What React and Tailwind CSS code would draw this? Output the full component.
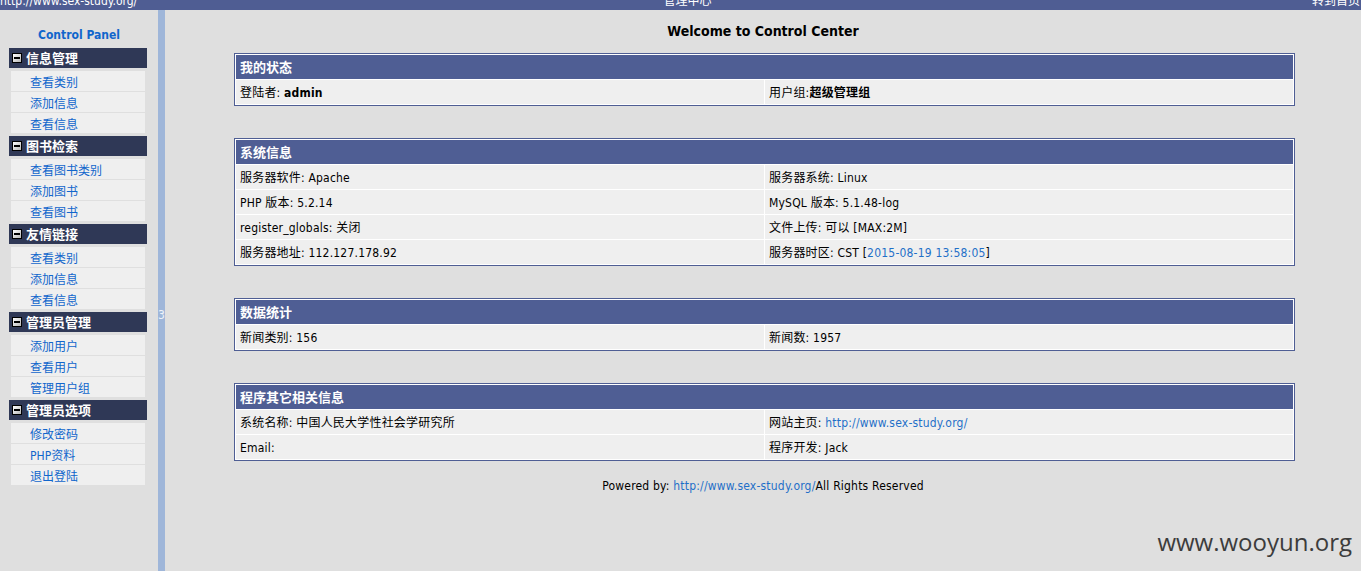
import React from "react";

const FONT = { fontFamily: '"DejaVu Sans Condensed", "DejaVu Sans", "Noto Sans CJK SC", sans-serif' };

const menu = [
  { title: "信息管理", items: ["查看类别", "添加信息", "查看信息"] },
  { title: "图书检索", items: ["查看图书类别", "添加图书", "查看图书"] },
  { title: "友情链接", items: ["查看类别", "添加信息", "查看信息"] },
  { title: "管理员管理", items: ["添加用户", "查看用户", "管理用户组"] },
  { title: "管理员选项", items: ["修改密码", "PHP资料", "退出登陆"] },
];

function MinusIcon() {
  return (
    <div className="w-[10px] h-[10px] border border-black bg-gradient-to-br from-white to-[#b8b8b8] flex items-center justify-center shrink-0">
      <div className="w-[6px] h-[2px] bg-black" />
    </div>
  );
}

function Box({ title, rows }) {
  return (
    <div className="w-[1061px] ml-[69px] border border-[#4f5e94] bg-white p-[1px] flex flex-col gap-[1px]">
      <div className="h-[24px] bg-[#4f5e94] text-white font-bold text-[13px] pl-[4px] pt-[2px] flex items-center">
        {title}
      </div>
      {rows.map((r, i) => (
        <div key={i} className="grid grid-cols-2 gap-[1px]">
          <div className="h-[24px] bg-[#efefef] pl-[4px] pt-[2px] flex items-center text-[12px] tracking-[0.2px] text-black whitespace-nowrap">{r[0]}</div>
          <div className="h-[24px] bg-[#efefef] pl-[4px] pt-[2px] flex items-center text-[12px] tracking-[0.2px] text-black whitespace-nowrap">{r[1]}</div>
        </div>
      ))}
    </div>
  );
}

export default function App() {
  const link = "text-[#1f6fc8]";
  return (
    <div className="relative h-[571px] w-full bg-[#dfdfdf] flex flex-col overflow-hidden" style={FONT}>
      {/* top bar */}
      <div className="h-[10px] bg-[#4f5d93] overflow-hidden text-white text-[12px] leading-[12px] grid grid-cols-3 shrink-0">
        <div className="-mt-[5px] whitespace-nowrap">http://www.sex-study.org/</div>
        <div className="-mt-[5px] text-center pl-[14px] whitespace-nowrap">管理中心</div>
        <div className="-mt-[5px] text-right pr-[1px] whitespace-nowrap">转到首页</div>
      </div>

      <div className="flex flex-1">
        {/* sidebar */}
        <div className="w-[158px] shrink-0 flex flex-col">
          <div className="pt-[17px] mb-[5px] leading-[16px] text-center text-[12px] font-bold text-[#1166cc]">
            Control Panel
          </div>
          {menu.map((sec) => (
            <div key={sec.title} className="mb-[3px]">
              <div className="ml-[9px] w-[138px] h-[20px] bg-[#2f3856] flex items-center pl-[3px] gap-[4px]">
                <MinusIcon />
                <span className="text-white font-bold text-[13px] leading-[20px] pt-[2px]">{sec.title}</span>
              </div>
              <div className="mt-[3px] ml-[11px] w-[134px] flex flex-col gap-[1px]">
                {sec.items.map((it) => (
                  <div key={it} className="h-[20px] bg-[#efefef] pl-[19px] pt-[3px] flex items-center text-[12px] text-[#1166cc]">
                    {it}
                  </div>
                ))}
              </div>
            </div>
          ))}
        </div>

        {/* splitter bar */}
        <div className="w-[7px] shrink-0 bg-[#9fb6d9] pt-[297px] text-center text-[12px] leading-[16px] text-[#eef3fa]">
          3
        </div>

        {/* main */}
        <div className="flex-1 flex flex-col">
          <div className="pt-[12px] mb-[13px] leading-[18px] text-center text-[14px] font-bold text-black">
            Welcome to Control Center
          </div>
          <div className="flex flex-col gap-[32px]">
            <Box
              title="我的状态"
              rows={[[<span>登陆者: <b>admin</b></span>, <span>用户组:<b>超级管理组</b></span>]]}
            />
            <Box
              title="系统信息"
              rows={[
                ["服务器软件: Apache", "服务器系统: Linux"],
                ["PHP 版本: 5.2.14", "MySQL 版本: 5.1.48-log"],
                ["register_globals: 关闭", "文件上传: 可以 [MAX:2M]"],
                ["服务器地址: 112.127.178.92", <span>服务器时区: CST [<span className={link}>2015-08-19 13:58:05</span>]</span>],
              ]}
            />
            <Box title="数据统计" rows={[["新闻类别: 156", "新闻数: 1957"]]} />
            <Box
              title="程序其它相关信息"
              rows={[
                ["系统名称: 中国人民大学性社会学研究所", <span>网站主页: <span className={link}>http://www.sex-study.org/</span></span>],
                ["Email:", "程序开发: Jack"],
              ]}
            />
          </div>
          <div className="mt-[17px] leading-[16px] text-center text-[12px] tracking-[0.2px] text-black">
            Powered by: <span className={link}>http://www.sex-study.org/</span>All Rights Reserved
          </div>
        </div>
      </div>

      <div
        className="absolute right-[9px] top-[526px] text-[24px] leading-[32px] text-[#3c3c3c]"
        style={{ fontFamily: '"Open Sans", sans-serif' }}
      >
        www.wooyun.org
      </div>
    </div>
  );
}
